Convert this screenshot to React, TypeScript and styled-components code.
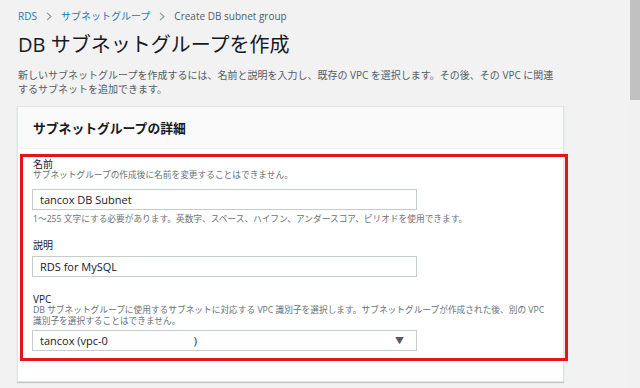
import styled, { createGlobalStyle } from 'styled-components'

const GlobalStyle = createGlobalStyle`
  html, body {
    margin: 0;
    padding: 0;
    background: #f2f2f2;
  }
  body {
    font-family: "Open Sans", "Noto Sans CJK JP", sans-serif;
    color: #16191f;
  }
`

const Page = styled.div`
  display: flex;
  width: 640px;
  height: 388px;
  overflow: hidden;
`

const Main = styled.main`
  flex: 1;
  padding: 9px 66px 0 17px;
  min-width: 0;
`

const Scrollbar = styled.div`
  width: 10px;
  background: #f1f1f1;
  display: flex;
  flex-direction: column;
`

const Thumb = styled.div`
  height: 100px;
  background: #c1c1c1;
`

const Breadcrumbs = styled.nav`
  display: flex;
  align-items: center;
  gap: 9px;
  height: 14px;
  font-size: 10px;
  line-height: 14px;
  padding-left: 1px;
`

const Crumb = styled.span<{ $current?: boolean }>`
  color: ${(p) => (p.$current ? '#545b64' : '#2a74b5')};
`

const Title = styled.h1`
  margin: 8px 0 0 1px;
  font-size: 20px;
  line-height: 28px;
  font-weight: 400;
  color: #16191f;
`

const Description = styled.p`
  margin: 9px 0 0 1px;
  font-size: 10px;
  line-height: 14px;
  color: #545b64;
  width: 544px;
`

const Card = styled.section`
  margin-top: 10px;
  background: #fff;
  border: 1px solid #e1e4e4;
  box-shadow: 0 1px 1px rgba(0, 28, 36, 0.2);
  padding-bottom: 20px;
`

const CardHeader = styled.header`
  height: 41px;
  display: flex;
  align-items: center;
  padding: 0 15px;
  background: #fafafa;
  border-bottom: 1px solid #f0f0f0;
`

const CardTitle = styled.h2`
  margin: 0;
  font-size: 12.8px;
  font-weight: 700;
  color: #16191f;
`

const Highlight = styled.div`
  margin: 5px -5px 0 2px;
  border: 3px solid #e2141c;
  padding: 1px 10px 7px 10px;
`

const Field = styled.div<{ $gap?: number }>`
  display: flex;
  flex-direction: column;
  margin-top: ${(p) => p.$gap ?? 0}px;
`

const Label = styled.label`
  font-size: 10px;
  line-height: 12px;
  color: #16191f;
`

const Hint = styled.div`
  font-size: 8.7px;
  line-height: 10.5px;
  color: #687078;
`

const Constraint = styled(Hint)`
  margin-top: 4px;
`

const Input = styled.div<{ $top: number }>`
  margin: ${(p) => p.$top}px 0 0 -1px;
  width: 385px;
  height: 21px;
  box-sizing: border-box;
  border: 1px solid #c6cbcc;
  background: #fff;
  display: flex;
  align-items: center;
  padding: 0 12px 0 7px;
  font-size: 11px;
  color: #16191f;
`

const Redacted = styled.span`
  display: inline-block;
  width: 86px;
`

const Arrow = styled.span`
  margin-left: auto;
  font-size: 9px;
  color: #545b64;
`

const Chevron = () => (
  <svg width="6" height="9" viewBox="0 0 6 9">
    <path d="M1 0.8 L5 4.5 L1 8.2" fill="none" stroke="#8d9596" strokeWidth="1.1" />
  </svg>
)

export default function App() {
  return (
    <>
      <GlobalStyle />
      <Page>
        <Main>
          <Breadcrumbs>
            <Crumb>RDS</Crumb>
            <Chevron />
            <Crumb>サブネットグループ</Crumb>
            <Chevron />
            <Crumb $current>Create DB subnet group</Crumb>
          </Breadcrumbs>
          <Title>DB サブネットグループを作成</Title>
          <Description>
            新しいサブネットグループを作成するには、名前と説明を入力し、既存の VPC を選択します。その後、その VPC に関連するサブネットを追加できます。
          </Description>
          <Card>
            <CardHeader>
              <CardTitle>サブネットグループの詳細</CardTitle>
            </CardHeader>
            <Highlight>
              <Field>
                <Label>名前</Label>
                <Hint>サブネットグループの作成後に名前を変更することはできません。</Hint>
                <Input $top={8}>tancox DB Subnet</Input>
                <Constraint>
                  1～255 文字にする必要があります。英数字、スペース、ハイフン、アンダースコア、ピリオドを使用できます。
                </Constraint>
              </Field>
              <Field $gap={15}>
                <Label>説明</Label>
                <Input $top={5}>RDS for MySQL</Input>
              </Field>
              <Field $gap={16}>
                <Label>VPC</Label>
                <Hint>
                  DB サブネットグループに使用するサブネットに対応する VPC 識別子を選択します。サブネットグループが作成された後、別の VPC 識別子を選択することはできません。
                </Hint>
                <Input $top={4}>
                  tancox (vpc-0<Redacted />)
                  <Arrow>▼</Arrow>
                </Input>
              </Field>
            </Highlight>
          </Card>
        </Main>
        <Scrollbar>
          <Thumb />
        </Scrollbar>
      </Page>
    </>
  )
}
